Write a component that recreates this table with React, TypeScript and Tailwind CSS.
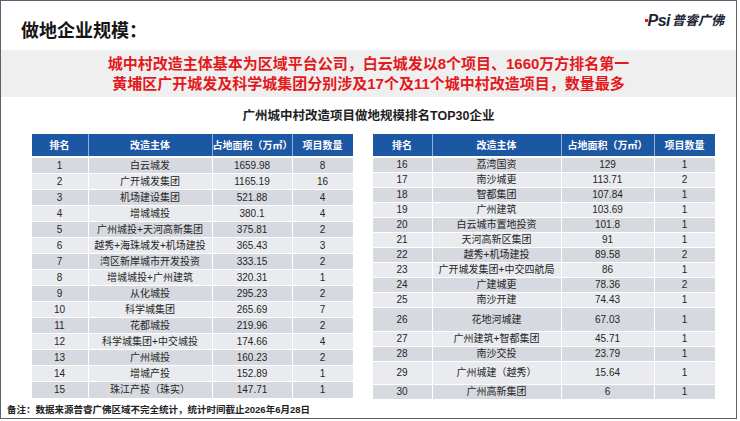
import React from 'react'

type Row = [string, string, string, string, number?]

const leftRows: Row[] = [
  ['1', '白云城发', '1659.98', '8'],
  ['2', '广开城发集团', '1165.19', '16'],
  ['3', '机场建设集团', '521.88', '4'],
  ['4', '增城城投', '380.1', '4'],
  ['5', '广州城投+天河高新集团', '375.81', '2'],
  ['6', '越秀+海珠城发+机场建投', '365.43', '3'],
  ['7', '湾区新岸城市开发投资', '333.15', '2'],
  ['8', '增城城投+广州建筑', '320.31', '1'],
  ['9', '从化城投', '295.23', '2'],
  ['10', '科学城集团', '265.69', '7'],
  ['11', '花都城投', '219.96', '2'],
  ['12', '科学城集团+中交城投', '174.66', '4'],
  ['13', '广州城投', '160.23', '2'],
  ['14', '增城产投', '152.89', '1'],
  ['15', '珠江产投（珠实）', '147.71', '1'],
]

const rightRows: Row[] = [
  ['16', '荔湾国资', '129', '1'],
  ['17', '南沙城更', '113.71', '2'],
  ['18', '智都集团', '107.84', '1'],
  ['19', '广州建筑', '103.69', '1'],
  ['20', '白云城市置地投资', '101.8', '1'],
  ['21', '天河高新区集团', '91', '1'],
  ['22', '越秀+机场建投', '89.58', '2'],
  ['23', '广开城发集团+中交四航局', '86', '1'],
  ['24', '广建城更', '78.36', '2'],
  ['25', '南沙开建', '74.43', '1'],
  ['26', '花地河城建', '67.03', '1', 24],
  ['27', '广州建筑+智都集团', '45.71', '1'],
  ['28', '南沙交投', '23.79', '1'],
  ['29', '广州城建（越秀）', '15.64', '1', 23],
  ['30', '广州高新集团', '6', '1', 14],
]

const font = { fontFamily: '"Liberation Sans", "Noto Sans CJK SC", sans-serif' }

const RankTable = ({ rows, cols, rowH }: { rows: Row[]; cols: string; rowH: number }) => {
  return (
    <div className="flex flex-col">
      <div className={`grid ${cols} h-[24px] border-b-2 border-white`}>
        {['排名', '改造主体', '占地面积（万㎡）', '项目数量'].map((h, i) => (
          <div
            key={h}
            className={`flex items-center justify-center bg-[#1b57a2] text-[10px] font-bold text-white ${i < 3 ? 'border-r border-[#8fb0d8]' : ''}`}
          >
            {h}
          </div>
        ))}
      </div>
      {rows.map((r, idx) => (
        <div
          key={r[0]}
          className={`grid ${cols} ${idx < rows.length - 1 ? 'border-b border-white' : ''} ${idx % 2 === 0 ? 'bg-[#d6d9e0]' : 'bg-[#e9ebef]'}`}
          style={{ height: r[4] ?? rowH }}
        >
          {r.slice(0, 4).map((c, i) => (
            <div
              key={i}
              className={`flex items-center justify-center text-[10px] leading-none text-[#262626] ${i < 3 ? 'border-r border-white' : ''}`}
            >
              {c}
            </div>
          ))}
        </div>
      ))}
    </div>
  )
}

const App = () => {
  return (
    <div className="h-[421px] w-[740px] bg-white" style={font}>
      <div className="relative flex h-[419px] w-[737px] flex-col overflow-hidden border-[1.5px] border-[#59626f]">
        <div className="flex h-[49px] items-start justify-between">
          <p className="pl-[20px] pt-[19px] text-[18px] font-bold leading-[22px] text-[#151515]">做地企业规模：</p>
          <div className="mr-[12px] mt-[11px] flex items-center leading-[18px]">
            <span className="relative text-[16px] font-black italic tracking-[-0.5px] text-[#1d2336]">
              <span className="absolute left-[1px] top-[7px] h-[3px] w-[3px] bg-[#e3191c]" />
              <span className="pl-[3px]">Psi</span>
            </span>
            <span className="ml-[2px] text-[13px] font-bold italic text-[#1d2336]">普睿广佛</span>
          </div>
        </div>

        <div className="flex h-[47px] flex-col items-center justify-center bg-[#efefef] text-[15px] font-bold leading-[20px] text-[#e3191c]">
          <p>城中村改造主体基本为区域平台公司，白云城发以8个项目、1660万方排名第一</p>
          <p>黄埔区广开城发及科学城集团分别涉及17个及11个城中村改造项目，数量最多</p>
        </div>

        <p className="mt-[12px] text-center text-[12.5px] font-bold leading-[14px] text-[#1e1e1e]">
          广州城中村改造项目做地规模排名TOP30企业
        </p>

        <div className="mt-[11px] flex items-start gap-[20px] pl-[30.5px]">
          <div className="w-[321px]">
            <RankTable rows={leftRows} cols="grid-cols-[57px_124px_80px_60px]" rowH={16} />
          </div>
          <div className="w-[342px]">
            <RankTable rows={rightRows} cols="grid-cols-[60px_129px_93px_60px]" rowH={15} />
          </div>
        </div>

        <p className="mt-[5px] pl-[6px] text-[9.5px] font-bold leading-[12px] text-[#222]">
          备注：数据来源普睿广佛区域不完全统计，统计时间截止2026年6月28日
        </p>
      </div>
    </div>
  )
}

export default App
